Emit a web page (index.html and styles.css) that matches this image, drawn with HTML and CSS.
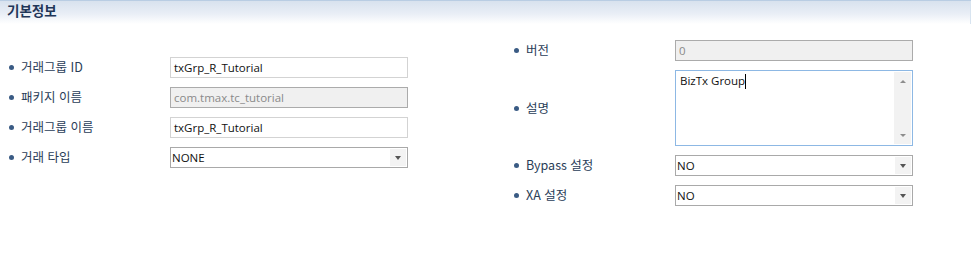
FILE: index.html
```html
<!DOCTYPE html>
<html lang="ko">
<head>
<meta charset="utf-8">
<title>기본정보</title>
<link rel="stylesheet" href="styles.css">
</head>
<body>
<div class="panel">
  <div class="header"><span class="title">기본정보</span></div>
  <div class="content">
    <div class="col col-left">
      <div class="label">거래그룹 ID</div>
      <div class="field text">txGrp_R_Tutorial</div>
      <div class="label">패키지 이름</div>
      <div class="field text disabled">com.tmax.tc_tutorial</div>
      <div class="label">거래그룹 이름</div>
      <div class="field text">txGrp_R_Tutorial</div>
      <div class="label">거래 타입</div>
      <div class="field select"><span class="val">NONE</span><span class="btn"><span class="arrow"></span></span></div>
    </div>
    <div class="col col-right">
      <div class="label">버전</div>
      <div class="field text disabled">0</div>
      <div class="label">설명</div>
      <div class="field area"><span class="val">BizTx Group<span class="caret"></span></span><span class="scroll"><span class="up"></span><span class="down"></span></span></div>
      <div class="label">Bypass 설정</div>
      <div class="field select"><span class="val">NO</span><span class="btn"><span class="arrow"></span></span></div>
      <div class="label">XA 설정</div>
      <div class="field select"><span class="val">NO</span><span class="btn"><span class="arrow"></span></span></div>
    </div>
  </div>
</div>
</body>
</html>
```

FILE: styles.css
```css
html, body {
  margin: 0;
  padding: 0;
  background: #ffffff;
}
body {
  font-family: "Noto Sans CJK KR", "Noto Sans", sans-serif;
  width: 973px;
  height: 263px;
  overflow: hidden;
}
.panel {
  width: 971px;
  border-top: 1px solid #b9cde3;
}
.header {
  height: 23px;
  padding-left: 7px;
  display: flex;
  align-items: center;
  background: linear-gradient(to bottom, #d8e2ee 0%, #e9eef6 55%, #ffffff 100%);
  border-right: 1px solid #d8e4f0;
}
.title {
  font-size: 13.5px;
  font-weight: bold;
  color: #1f3658;
  line-height: 1;
  margin-top: -3px;
}
.content {
  display: flex;
}
.col {
  display: grid;
  grid-template-columns: 170px 238px;
  row-gap: 9px;
}
.col-left {
  padding-top: 33px;
  grid-template-rows: 21px 21px 21px 21px;
}
.col-right {
  margin-left: 97px;
  padding-top: 16px;
  grid-template-rows: 21px 76px 21px 21px;
}
.label {
  display: flex;
  align-items: center;
  padding-left: 9px;
  font-size: 12.5px;
  color: #2a3d58;
  line-height: 1;
}
.label::before {
  content: "";
  width: 5px;
  height: 5px;
  border-radius: 50%;
  background: #3a5b84;
  margin-right: 7px;
  flex: none;
}
.field {
  box-sizing: border-box;
  border: 1px solid #d3d3d3;
  background: #ffffff;
  font-family: "Open Sans", "Noto Sans", sans-serif;
  font-size: 11.5px;
  color: #111111;
  display: flex;
  align-items: center;
  padding-left: 3px;
  line-height: 1;
}
.field.disabled {
  background: #f0f0f0;
  border-color: #ababab;
  color: #8a8a8a;
}
.field.select {
  border-color: #a9a9a9;
  padding-left: 1px;
  justify-content: space-between;
}
.select .btn {
  align-self: stretch;
  width: 16px;
  margin: 1px;
  background: #f3f3f3;
  display: flex;
  align-items: center;
  justify-content: center;
}
.arrow {
  width: 0;
  height: 0;
  border-left: 3px solid transparent;
  border-right: 3px solid transparent;
  border-top: 4px solid #555555;
}
.field.area {
  border-color: #8db8e4;
  align-items: stretch;
  justify-content: space-between;
  padding-left: 4px;
}
.area .val {
  padding-top: 4px;
  display: flex;
  align-items: flex-start;
  height: 14px;
}
.caret {
  display: inline-block;
  width: 1px;
  height: 15px;
  background: #000000;
  margin-top: -1px;
}
.scroll {
  width: 17px;
  margin: 1px;
  background: #f2f2f2;
  display: flex;
  flex-direction: column;
  justify-content: space-between;
  align-items: center;
  padding: 8px 0 7px;
  box-sizing: border-box;
}
.scroll .up {
  width: 0;
  height: 0;
  border-left: 3px solid transparent;
  border-right: 3px solid transparent;
  border-bottom: 3px solid #8d8d8d;
}
.scroll .down {
  width: 0;
  height: 0;
  border-left: 3px solid transparent;
  border-right: 3px solid transparent;
  border-top: 3px solid #8d8d8d;
}
```
